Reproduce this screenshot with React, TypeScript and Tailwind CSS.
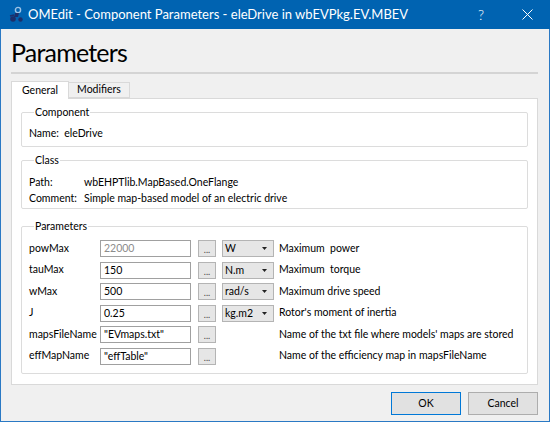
import { ReactNode } from "react";

const rows = [
  { name: "powMax", value: "22000", unit: "W", desc: "Maximum  power", dim: true },
  { name: "tauMax", value: "150", unit: "N.m", desc: "Maximum  torque" },
  { name: "wMax", value: "500", unit: "rad/s", desc: "Maximum drive speed" },
  { name: "J", value: "0.25", unit: "kg.m2", desc: "Rotor's moment of inertia" },
  { name: "mapsFileName", value: "\"EVmaps.txt\"", desc: "Name of the txt file where models' maps are stored" },
  { name: "effMapName", value: "\"effTable\"", desc: "Name of the efficiency map in mapsFileName" },
];

function Group({ title, children, className }: { title: string; children: ReactNode; className?: string }) {
  return (
    <fieldset className={"min-w-0 border border-[#dcdcdc] rounded-[2px] pl-[7px] pr-[6px] " + (className ?? "")}>
      <legend className="ml-[5px] px-[1px] leading-[13px]">{title}</legend>
      {children}
    </fieldset>
  );
}

function Logo() {
  return (
    <svg width="17" height="17" viewBox="0 0 17 17">
      <circle cx="10" cy="4" r="2.6" fill="none" stroke="#9cc3e6" strokeWidth="1.4" />
      <path d="M7 7 L11 7 L10 11 L6 11 Z" fill="#1c2f6b" />
      <circle cx="5" cy="13" r="2.8" fill="#1c2f6b" />
      <circle cx="12.5" cy="13.5" r="2.2" fill="#1c2f6b" />
      <path d="M2 10 L6 9" stroke="#1c2f6b" strokeWidth="1.5" />
    </svg>
  );
}

function Arrow() {
  return (
    <svg width="5" height="3" viewBox="0 0 5 3">
      <path d="M0 0 L5 0 L2.5 3 Z" fill="#222" />
    </svg>
  );
}

export default function App() {
  return (
    <div className="w-[550px] h-[422px] flex flex-col bg-[#2a79c4] font-['Lato',sans-serif] text-[10.5px] text-black">
      <div className="h-[29px] bg-[#0063b1] flex items-center text-white shrink-0">
        <div className="ml-[8px] mr-[3px]"><Logo /></div>
        <span className="text-[13px]">OMEdit - Component Parameters - eleDrive in wbEVPkg.EV.MBEV</span>
        <span className="ml-auto mr-[38px] text-[14px] font-light">?</span>
        <svg width="11" height="11" viewBox="0 0 11 11" className="mr-[17px]">
          <path d="M0.5 0.5 L10.5 10.5 M10.5 0.5 L0.5 10.5" stroke="white" strokeWidth="1" />
        </svg>
      </div>
      <div className="flex-1 mx-[1px] mb-[1px] bg-[#f0f0f0] flex flex-col px-[10px]">
        <div className="text-[25px] tracking-[-0.8px] leading-[34px] pt-[6px] pb-[3px] border-b-2 border-[#d4d4d4] mr-[1px]">Parameters</div>
        <div className="flex items-end mt-[6px] h-[18px]">
          <div className="w-[58px] h-[18px] bg-white border border-b-0 border-[#d9d9d9] flex items-center justify-center relative z-10 top-[1px]">General</div>
          <div className="w-[61px] h-[16px] border border-l-0 border-[#d9d9d9] flex items-center justify-center">Modifiers</div>
        </div>
        <div className="h-[287px] bg-white border border-[#d9d9d9] pl-[9px] pr-[9px] pt-[7px] mr-[1px]">
          <Group title="Component" className="h-[41px]">
            <div className="pt-[7px] leading-[15px]">Name:&nbsp; eleDrive</div>
          </Group>
          <Group title="Class" className="h-[55px] mt-[7px]">
            <div className="pt-[8px] flex leading-[15px]"><span className="w-[55px]">Path:</span>wbEHPTlib.MapBased.OneFlange</div>
            <div className="pt-[1px] flex leading-[15px]"><span className="w-[55px]">Comment:</span>Simple map-based model of an electric drive</div>
          </Group>
          <Group title="Parameters" className="h-[154px] mt-[11px]">
            <div className="pt-[5px]">
              {rows.map((r) => (
                <div key={r.name} className="h-[21.5px] flex items-center">
                  <span className="w-[71px]">{r.name}</span>
                  <div className={"w-[91px] h-[17px] border border-[#a0a0a0] bg-white pl-[3px] leading-[15px] " + (r.dim ? "text-[#8c8c8c]" : "")}>{r.value}</div>
                  <div className="ml-[7px] w-[18px] h-[17px] border border-[#b4b4b4] bg-[#e6e6e6] flex items-end justify-center text-[9px] leading-[12px] text-[#444]">...</div>
                  {r.unit ? (
                    <div className="ml-[6px] w-[52px] h-[17px] border border-[#b4b4b4] bg-[#e6e6e6] flex items-center justify-between pl-[2px] pr-[6px] leading-[15px]">
                      <span>{r.unit}</span>
                      <Arrow />
                    </div>
                  ) : (
                    <div className="ml-[6px] w-[52px]" />
                  )}
                  <span className="ml-[5px] whitespace-pre">{r.desc}</span>
                </div>
              ))}
            </div>
          </Group>
        </div>
        <div className="flex justify-end gap-[7px] mt-[7px] mr-[1px]">
          <div className="w-[70px] h-[23px] border border-[#0078d7] bg-[#e1e1e1] flex items-center justify-center">OK</div>
          <div className="w-[70px] h-[23px] border border-[#adadad] bg-[#e1e1e1] flex items-center justify-center">Cancel</div>
        </div>
      </div>
    </div>
  );
}
